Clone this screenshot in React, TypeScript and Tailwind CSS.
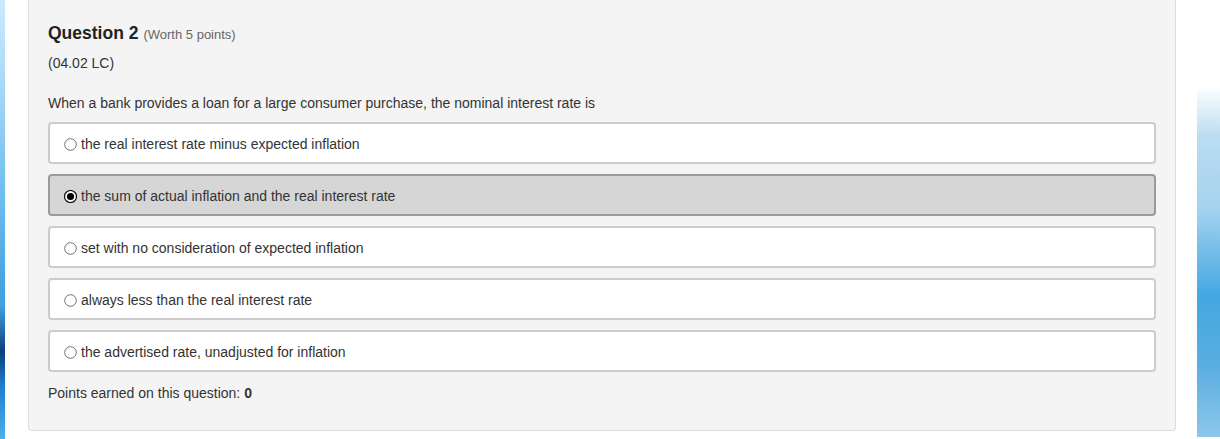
import React from "react";

const options = [
  { text: "the real interest rate minus expected inflation", selected: false },
  { text: "the sum of actual inflation and the real interest rate", selected: true },
  { text: "set with no consideration of expected inflation", selected: false },
  { text: "always less than the real interest rate", selected: false },
  { text: "the advertised rate, unadjusted for inflation", selected: false },
];

function Radio({ checked }: { checked: boolean }) {
  if (checked) {
    return (
      <svg width="13" height="13" viewBox="0 0 13 13" className="shrink-0">
        <circle cx="6.5" cy="6.5" r="6" fill="#fff" stroke="#111" strokeWidth="1.2" />
        <circle cx="6.5" cy="6.5" r="3.6" fill="#000" />
      </svg>
    );
  }
  return (
    <svg width="13" height="13" viewBox="0 0 13 13" className="shrink-0">
      <circle cx="6.5" cy="6.5" r="5.8" fill="#fff" stroke="#6f6f6f" strokeWidth="1" />
    </svg>
  );
}

export default function App() {
  return (
    <div className="relative h-[439px] w-[1220px] overflow-hidden bg-white font-['Liberation_Sans',Arial,sans-serif] text-[#333]">
      {/* left backdrop edge */}
      <div className="absolute left-0 top-0 h-full w-[5px] bg-[linear-gradient(180deg,#cdeafd_0%,#a6d8f8_20%,#6cbcef_45%,#3d9ee0_70%,#0b3f7a_80%,#1d7fd0_88%,#4db0ea_100%)]" />
      {/* right backdrop edge */}
      <div className="absolute right-0 top-[85px] h-[352px] w-[23px] bg-[linear-gradient(180deg,#ffffff_0%,#b9dcf0_15%,#a5d3ef_35%,#44a7e1_60%,#5aaee0_80%,#8dc7ec_100%)]" />

      <div className="ml-[28px] w-[1148px] h-[431px] rounded-b-[4px] border border-t-0 border-[#dddddd] bg-[#f4f4f4] px-[19px] pt-[22px]">
        <div className="flex items-baseline gap-[5px] leading-[22px]">
          <span className="text-[17.5px] font-bold text-[#222]">Question 2</span>
          <span className="text-[13px] text-[#666]">(Worth 5 points)</span>
        </div>
        <div className="mt-[9px] text-[14px] leading-[16px]">(04.02 LC)</div>
        <div className="mt-[24px] text-[14px] leading-[16px]">
          When a bank provides a loan for a large consumer purchase, the nominal interest rate is
        </div>
        <div className="mt-[11px] flex flex-col gap-[10px]">
          {options.map((o) => (
            <div
              key={o.text}
              className={
                o.selected
                  ? "flex h-[42px] items-center gap-[4px] rounded-[4px] border-2 border-[#9a9a9a] bg-[#d6d6d6] pl-[14px] pt-[2px] text-[14px]"
                  : "flex h-[42px] items-center gap-[4px] rounded-[4px] border-2 border-[#cccccc] bg-white pl-[14px] pt-[2px] text-[14px]"
              }
            >
              <Radio checked={o.selected} />
              <span>{o.text}</span>
            </div>
          ))}
        </div>
        <div className="mt-[13px] text-[14px] leading-[16px]">
          Points earned on this question: <span className="font-bold">0</span>
        </div>
      </div>
    </div>
  );
}
